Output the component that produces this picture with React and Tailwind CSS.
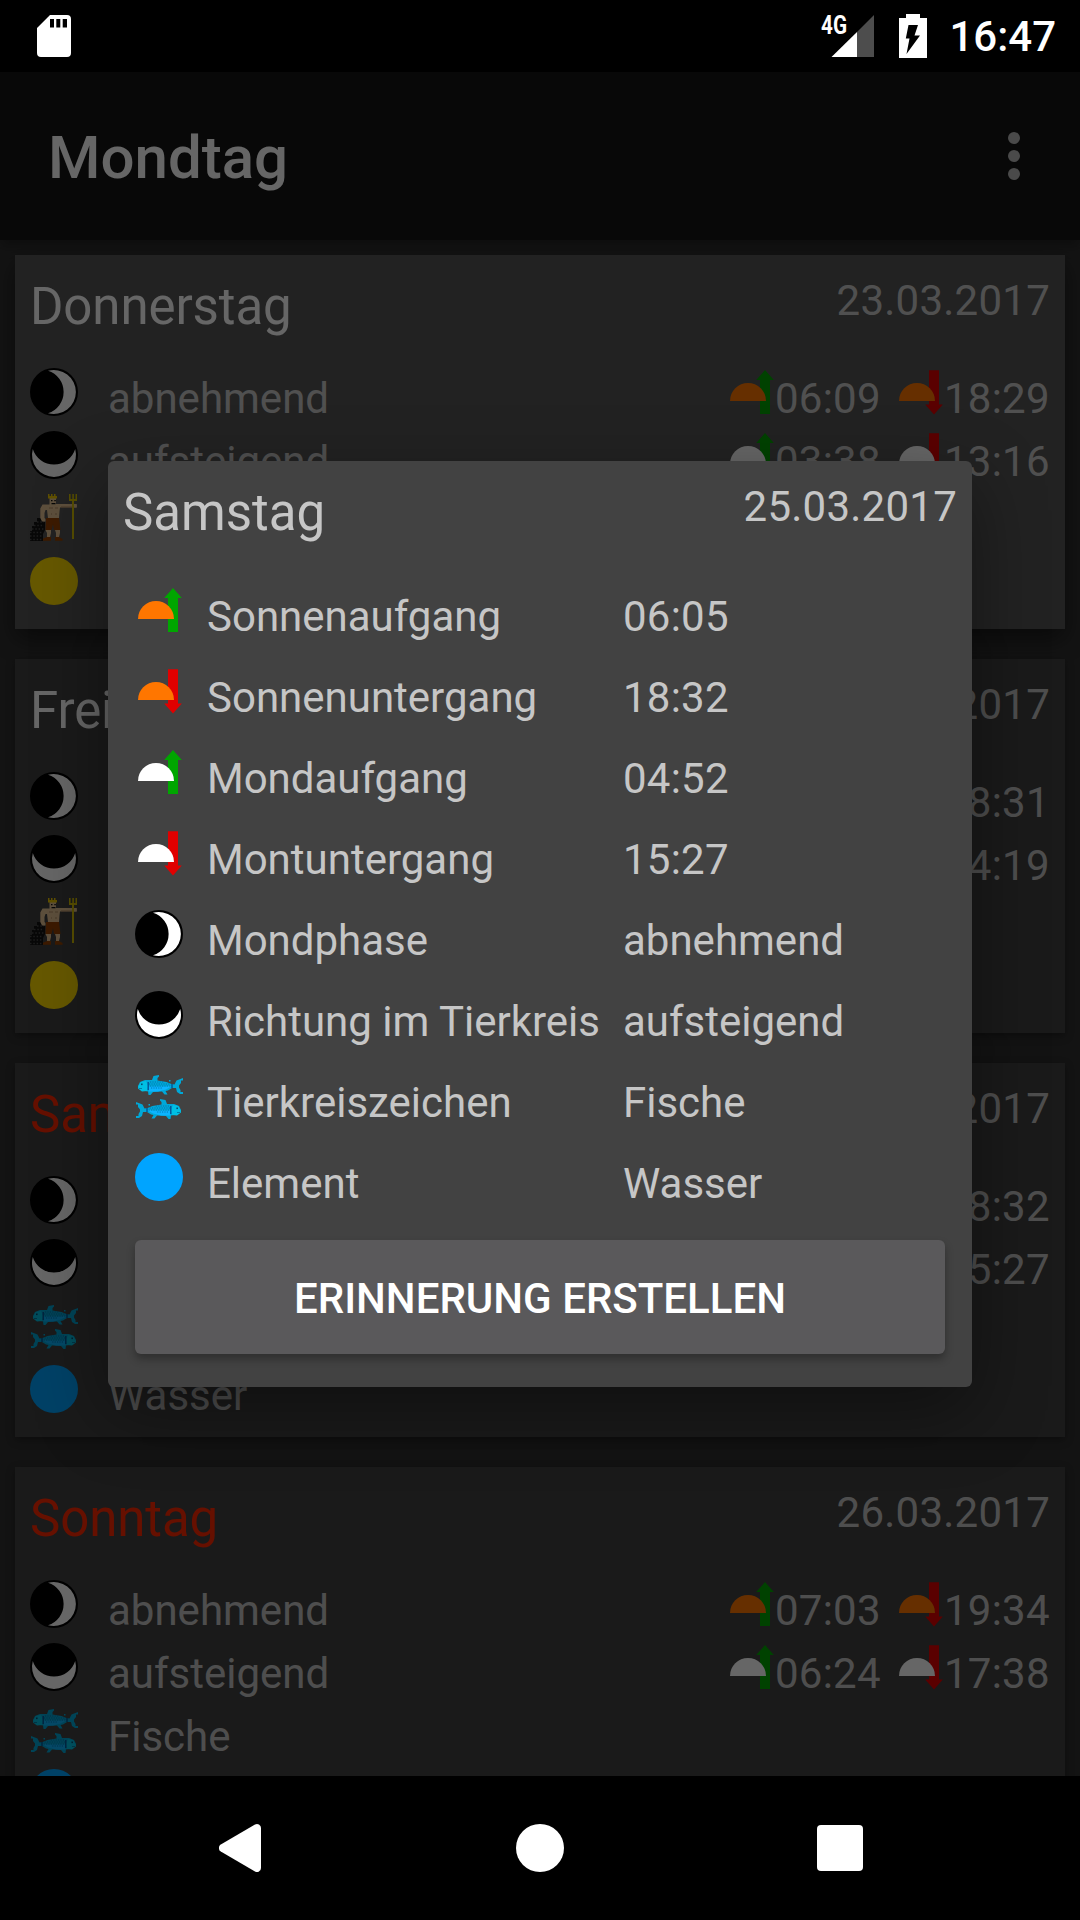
import React from "react";

const DAYS = [
  { name: "Donnerstag", date: "23.03.2017", sign: "Wassermann", element: "Luft", sun: ["06:09", "18:29"], moon: ["03:38", "13:16"], active: true },
  { name: "Freitag", date: "24.03.2017", sign: "Wassermann", element: "Luft", sun: ["06:07", "18:31"], moon: ["04:17", "14:19"] },
  { name: "Samstag", date: "25.03.2017", sign: "Fische", element: "Wasser", sun: ["06:05", "18:32"], moon: ["04:52", "15:27"], weekend: true },
  { name: "Sonntag", date: "26.03.2017", sign: "Fische", element: "Wasser", sun: ["07:03", "19:34"], moon: ["06:24", "17:38"], weekend: true },
];

function Icon({ children }) {
  return (
    <svg viewBox="0 0 48 48" className="block h-12 w-12 shrink-0 overflow-visible">
      {children}
    </svg>
  );
}

function RiseSet({ color, down }) {
  return (
    <Icon>
      {down ? (
        <path d="M33 2.3h10v34.2h3.8L38 46.5l-8.8-10H33z" fill="#e00000" />
      ) : (
        <path d="M38 2l8.800 10H43v34H33V12h-3.800z" fill="#00a600" />
      )}
      <path d="M3 33a18 18 0 0 1 36 0z" fill={color} />
    </Icon>
  );
}

function Moon({ turned }) {
  return (
    <Icon>
      <g transform={turned ? "rotate(90 24 24)" : undefined}>
        <circle cx="24" cy="24" r="24" fill="#000" />
        <path d="M18 2.800A22 22 0 1 1 18 45.200A22.200 22.200 0 0 0 18 2.800z" fill="#fff" />
      </g>
    </Icon>
  );
}

function Fish() {
  return (
    <g>
      <path
        d="M3 13l2-4 5-2h7l1.500-4L24 2v1.500L22.500 5v2.500l9 1.500 5 2 3 .500 2-4L48 5v2.500h-2V10l-2 2.500v2l1.500 2.500v2H48v2h-3l-3-2-1-4h-4l-4 2.500-2.500.500 2 3.500h-3l-2.500-3-9 .500-2.500 3h-2l-.500-3.500-6-1-4-3z"
        fill="#00a8d8"
      />
      <path d="M13 13.500h16l8-.500-6 3.500-8 2h-9z" fill="#0cb4ff" />
      <path d="M3.500 13l2.500-4 5-1 2 5-1 5-5 .500-4-3z" fill="#00c0e4" />
      <path d="M15 9h14M14 11h21M15 13h21M16 15h12" stroke="#0070ac" strokeWidth="0.9" strokeDasharray="1.200 1.200" fill="none" />
      <path d="M37 11v4M13.200 9v8" stroke="#004e91" strokeWidth="1.300" />
      <rect x="6" y="10.500" width="1.600" height="1.600" fill="#004e78" />
      <path d="M4 15.500h3" stroke="#006f9a" strokeWidth="0.8" />
      <rect x="34" y="7" width="1.500" height="1.500" fill="#00a8d8" />
    </g>
  );
}

function Pisces() {
  return (
    <Icon>
      <g transform="translate(0 1)">
        <Fish />
      </g>
      <g transform="translate(49 25) scale(-1 1)">
        <Fish />
      </g>
    </Icon>
  );
}

function Aquarius() {
  return (
    <Icon>
      <path d="M9 24h4v4h2v8l-2 4v7H0V37h2v-5h2v-4h3v-4z" fill="#141414" />
      <path
        d="M0 38.500h13M0 42h13M0 45.500h13M2 35h12M4 31.500h10M7 28h7"
        stroke="#4c4c4c"
        strokeWidth="1.400"
        strokeDasharray="1.500 1.800"
      />
      <path d="M19.500 4H26v6h20.700v3.500H30l-.500 4-.500 6.500H18l-1-8h-1.500l-1 3v5l1 1v2.500H12L10.300 24V14.500l2.200-4h7z" fill="#e8c696" />
      <path d="M19 14h4M25 14h3M21 20h1M25 20h2M31 13h14" stroke="#b08a60" strokeWidth="0.9" />
      <path d="M18 0h1.500v2H21V0h1.500v2H24V0h1.500v2H27v2.500h-9z" fill="#f0c800" />
      <path d="M21 6h1.500v1.300H21zM24.300 6h1.500v1.300h-1.500zM21.500 9h4v1.200h-4z" fill="#111" />
      <path d="M39 0h1.600v5h1.700V0h1.600v5h1.600V0h1.500v7h-3v38h-2V7h-3z" fill="#d6c000" />
      <path d="M44 10.500h2.700v3H44z" fill="#e8c696" />
      <path d="M16 24h13l1.500 12h-6.500l-1-6-1.500 6h-6z" fill="#964200" />
      <path d="M15.500 36H21v3l-1 4h-3v-4zM25 36h5v3l-1 4h-3v-4z" fill="#e8c696" />
      <path d="M17 43h4v3.700h-8v-2zM25 43h4l3.500 2v1.700H25z" fill="#964200" />
    </Icon>
  );
}

function Dot({ element }) {
  return (
    <Icon>
      <circle cx="24" cy="24" r="24" fill={element === "Luft" ? "#ffdc00" : "#00a4ff"} />
    </Icon>
  );
}

const SUN = "#ff7600";
const MOON = "#ffffff";

function Times({ values, color }) {
  return (
    <div className="flex tracking-[0.24px]">
      <RiseSet color={color} />
      <span className="w-[106px] leading-[61px]">{values[0]}</span>
      <div className="ml-[15px] flex">
        <RiseSet color={color} down />
        <span className="w-[106px] leading-[61px]">{values[1]}</span>
      </div>
    </div>
  );
}

function CardRow({ icon, label, children }) {
  return (
    <div className="flex h-[63px] items-start">
      {icon}
      <span className="ml-[30px] flex-1 leading-[61px]">{label}</span>
      {children}
    </div>
  );
}

function DayCard({ day }) {
  return (
    <section
      className={`h-[374px] shrink-0 pt-[15px] pr-[15px] pl-[15px] text-[42px] text-white/70 ${
        day.active ? "bg-[#555555] shadow-[0_10px_22px_rgba(0,0,0,0.45)]" : "bg-[#424242] shadow-[0_3px_8px_rgba(0,0,0,0.35)]"
      }`}
    >
      <header className="flex h-[98px] items-start justify-between">
        <h2 className={`text-[51px] leading-[74px] tracking-[-0.1px] ${day.weekend ? "text-[#ff2800]" : "text-white"}`}>{day.name}</h2>
        <span className="leading-[61px] tracking-[0.24px]">{day.date}</span>
      </header>
      <CardRow icon={<Moon />} label="abnehmend">
        <Times values={day.sun} color={SUN} />
      </CardRow>
      <CardRow icon={<Moon turned />} label="aufsteigend">
        <Times values={day.moon} color={MOON} />
      </CardRow>
      <CardRow icon={day.sign === "Fische" ? <Pisces /> : <Aquarius />} label={day.sign} />
      <CardRow icon={<Dot element={day.element} />} label={day.element} />
    </section>
  );
}

const DETAILS = [
  [<RiseSet color={SUN} />, "Sonnenaufgang", "06:05"],
  [<RiseSet color={SUN} down />, "Sonnenuntergang", "18:32"],
  [<RiseSet color={MOON} />, "Mondaufgang", "04:52"],
  [<RiseSet color={MOON} down />, "Montuntergang", "15:27"],
  [<Moon />, "Mondphase", "abnehmend"],
  [<Moon turned />, "Richtung im Tierkreis", "aufsteigend"],
  [<Pisces />, "Tierkreiszeichen", "Fische"],
  [<Dot element="Wasser" />, "Element", "Wasser"],
];

function DetailDialog() {
  return (
    <div className="absolute top-[461px] left-[108px] h-[926px] w-[864px] rounded-md bg-[#424242] text-[42px] text-[#c6c6c6] shadow-[0_24px_72px_rgba(0,0,0,0.4)]">
      <header className="flex h-[125px] items-start justify-between px-[15px] pt-[15px]">
        <h2 className="text-[51px] leading-[74px]">Samstag</h2>
        <span className="leading-[61px] tracking-[0.24px]">25.03.2017</span>
      </header>
      <div className="px-[27px]">
        {DETAILS.map(([icon, label, value], i) => (
          <div key={label} className="flex h-[81px] items-start">
            {icon}
            <span className="ml-6 w-[416px] leading-[61px] whitespace-nowrap">{label}</span>
            <span className={`leading-[61px] ${i < 4 ? "tracking-[0.24px]" : ""}`}>{value}</span>
          </div>
        ))}
        <button className="mt-[6px] h-[114px] w-full rounded-md bg-[#5a595b] pt-[2px] text-[42px] leading-[114px] font-medium text-white shadow-[0_5px_9px_rgba(0,0,0,0.3)]">
          ERINNERUNG ERSTELLEN
        </button>
      </div>
    </div>
  );
}

function StatusBar() {
  return (
    <div className="flex h-[72px] shrink-0 items-center justify-between bg-black pr-[24px] pl-[37px] text-white">
      <svg viewBox="0 0 34 42" className="h-[42px] w-[34px]">
        <path
          fillRule="evenodd"
          d="M13 0h17a4 4 0 0 1 4 4v34a4 4 0 0 1-4 4H4a4 4 0 0 1-4-4V13zM13 4v8.500h4V4zM19.300 4v8.500h4V4zM25.700 4v8.500h4.300V4z"
          fill="#fff"
        />
      </svg>
      <div className="flex items-center">
        <svg viewBox="0 0 53 44" className="h-11 w-[53px] overflow-visible">
          <path d="M53 1v42H36V18z" fill="#4d4d4d" />
          <path d="M36 18v25H10.500z" fill="#fff" />
          <text x="0" y="19.500" fontFamily="Roboto, sans-serif" fontWeight="700" fontSize="25" textLength="26" lengthAdjust="spacingAndGlyphs" fill="#fff">
            4G
          </text>
        </svg>
        <svg viewBox="0 0 28 44" className="ml-[25px] h-11 w-7">
          <path d="M7 0h14v4h7v40H0V4h7z" fill="#fff" />
          <path d="M9.500 11h9.500l-3.500 10.500H21L7.500 40l3-15.500H6.800z" fill="#000" />
        </svg>
        <span className="ml-[22px] pt-[2px] text-[42px] leading-[72px] font-medium">16:47</span>
      </div>
    </div>
  );
}

function NavBar() {
  return (
    <nav className="flex h-36 shrink-0 items-center justify-between bg-black pr-[217px] pl-[219px]">
      <svg viewBox="0 0 42 48" className="h-12 w-[42px]">
        <path d="M36 .6a4 4 0 0 1 6 3.400v40a4 4 0 0 1-6 3.400L1.800 27.400a4 4 0 0 1 0-6.800z" fill="#fff" />
      </svg>
      <span className="ml-[2px] h-12 w-12 rounded-full bg-white" />
      <span className="h-[46px] w-[46px] rounded-[4px] bg-white" />
    </nav>
  );
}

export default function App() {
  return (
    <div className="flex h-[1920px] w-[1080px] flex-col overflow-hidden bg-black font-['Roboto',sans-serif]">
      <StatusBar />
      <main className="flex min-h-0 flex-1 flex-col overflow-hidden bg-[#303030]">
        <div className="flex h-[168px] shrink-0 items-center justify-between bg-[#141414] pr-[60px] pl-12 shadow-[0_4px_12px_rgba(0,0,0,0.35)]">
          <h1 className="pt-[4px] text-[60px] leading-[72px] font-medium text-white">Mondtag</h1>
          <div className="flex flex-col gap-[6px]">
            <span className="h-3 w-3 rounded-full bg-[#bababa]" />
            <span className="h-3 w-3 rounded-full bg-[#bababa]" />
            <span className="h-3 w-3 rounded-full bg-[#bababa]" />
          </div>
        </div>
        <div className="flex min-h-0 flex-1 flex-col gap-[30px] overflow-hidden px-[15px] pt-[15px]">
          {DAYS.map((day) => (
            <DayCard key={day.date} day={day} />
          ))}
        </div>
      </main>
      <div className="absolute top-[72px] left-0 h-[1704px] w-[1080px] bg-black/60" />
      <DetailDialog />
      <NavBar />
    </div>
  );
}
